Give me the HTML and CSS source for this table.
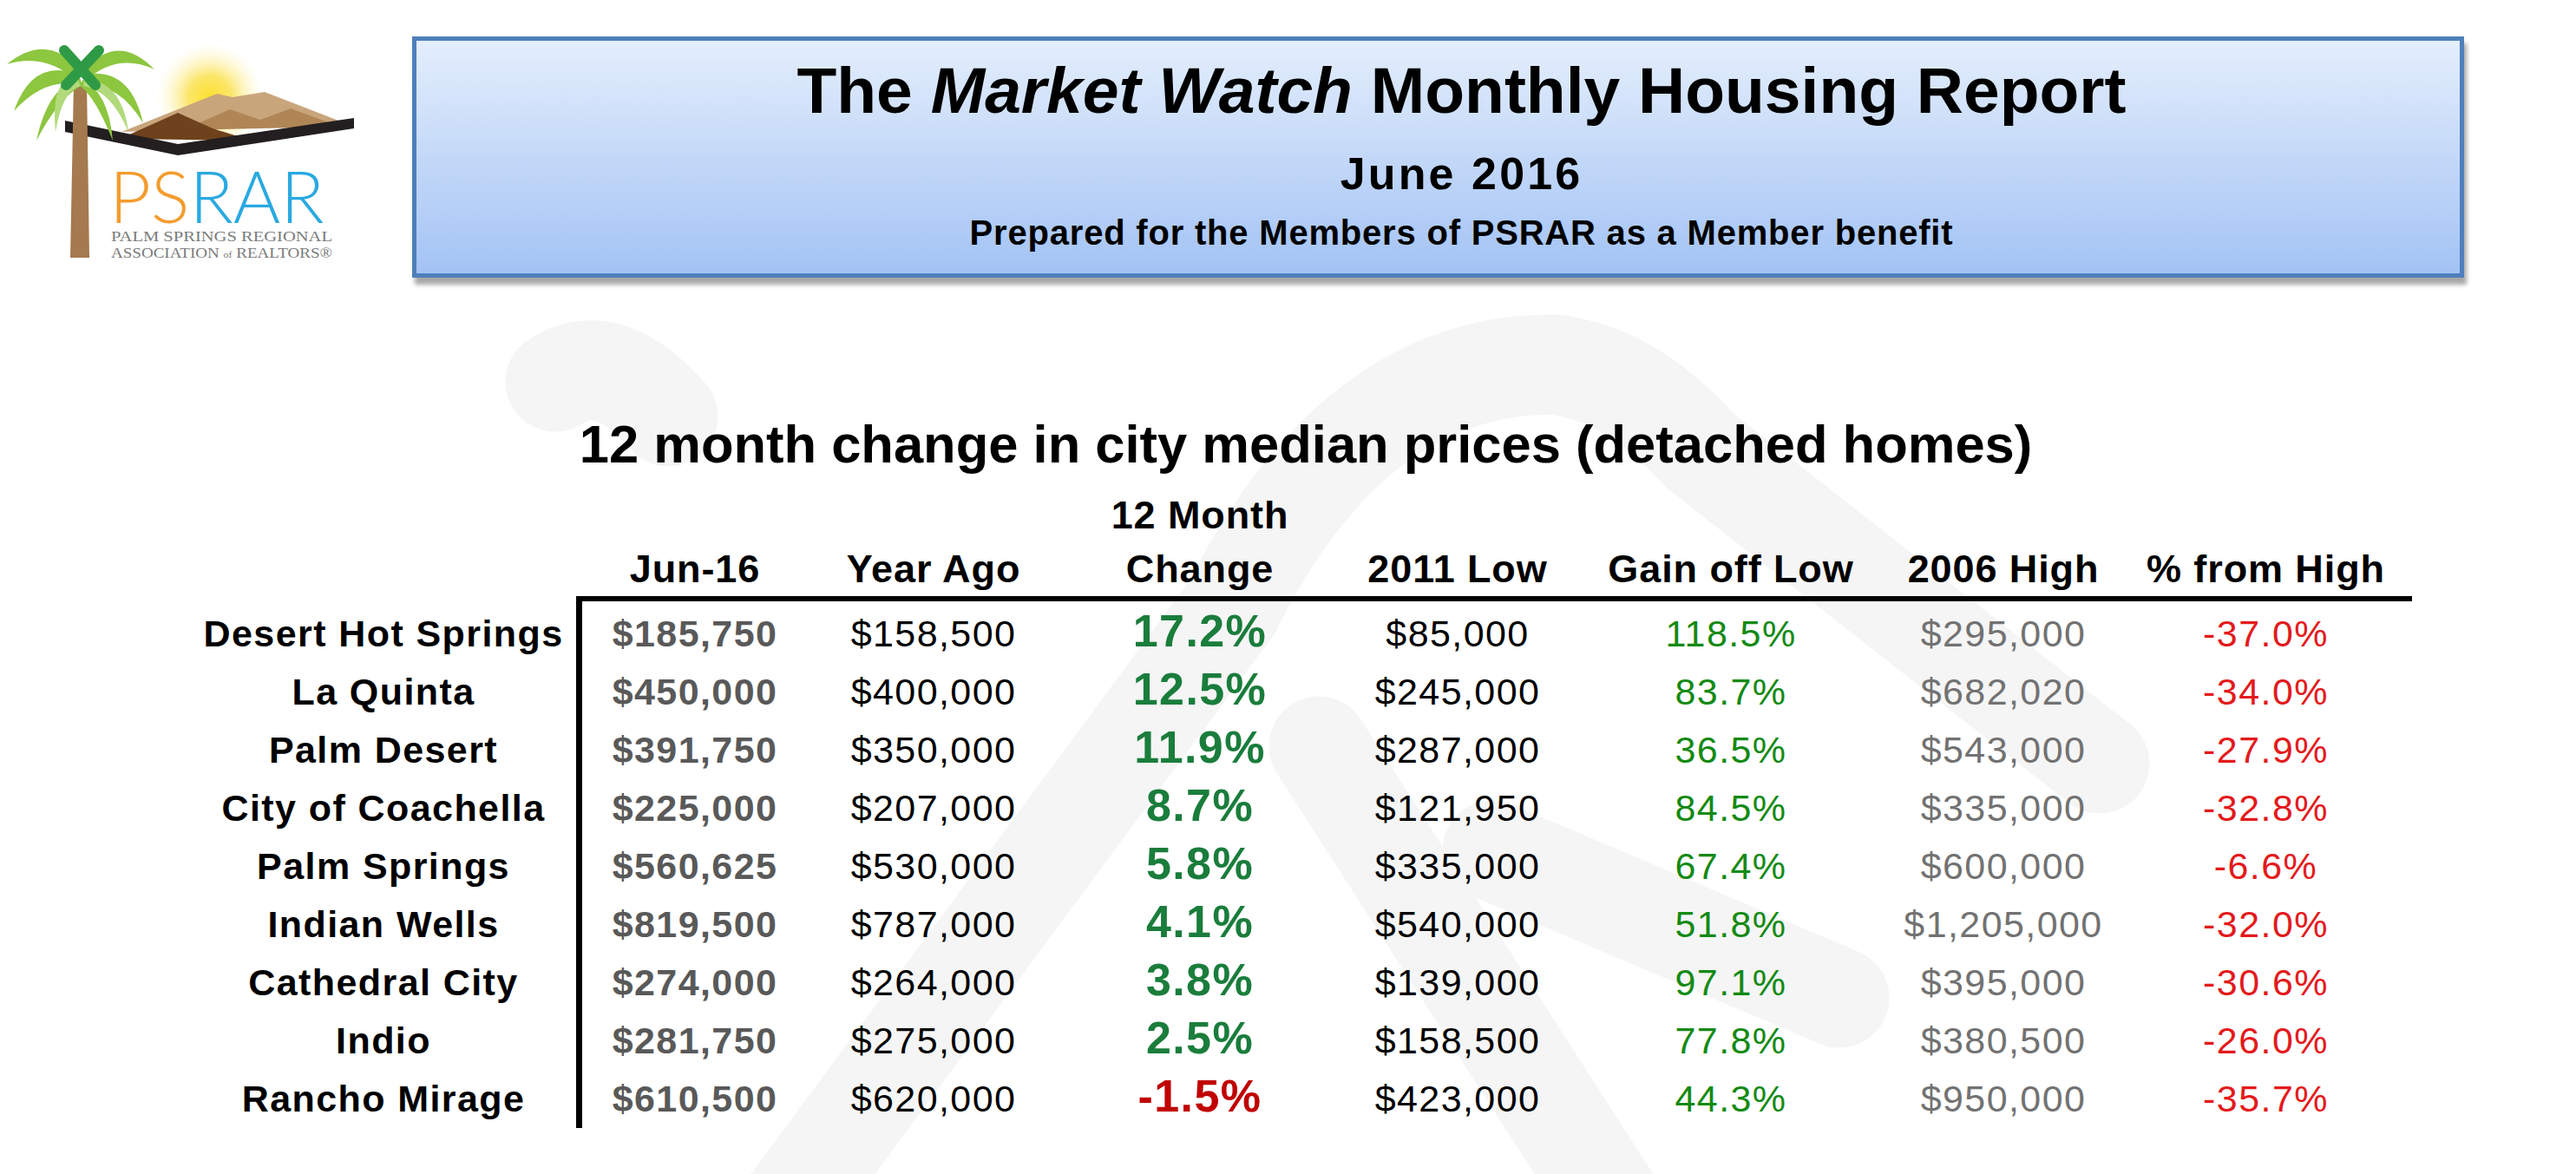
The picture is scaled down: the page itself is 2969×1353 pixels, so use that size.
FILE: index.html
```html
<!DOCTYPE html>
<html lang="en">
<head>
<meta charset="utf-8">
<title>The Market Watch Monthly Housing Report</title>
<link rel="stylesheet" href="styles.css">
</head>
<body>
<svg class="watermark" viewBox="0 0 2969 1353" aria-hidden="true">
  <g fill="none" stroke="#f5f5f5" stroke-linecap="round" stroke-width="115">
    <path d="M640 440 Q700 400 770 480"/>
    <path d="M880 1430 L1420 700"/>
    <path d="M1420 700 Q1560 420 1790 420 Q1880 430 1960 520 L2420 880"/>
    <path d="M1520 860 L1880 1420"/>
    <path d="M1720 980 L2120 1150"/>
  </g>
</svg>
<div class="page">
  <div class="top">
    <svg class="logo" viewBox="0 0 420 320">
      <defs>
        <radialGradient id="sun">
          <stop offset="0" stop-color="#fde130"/>
          <stop offset="0.4" stop-color="#fbe66a"/>
          <stop offset="1" stop-color="#fff8d0" stop-opacity="0"/>
        </radialGradient>
      </defs>
      <circle cx="242" cy="112" r="62" fill="url(#sun)"/>
      <path d="M140 152 L200 128 L250 108 L268 112 L305 106 L398 142 Z" fill="#c9a57c"/>
      <path d="M210 150 L265 126 L300 138 L335 125 L392 146 Z" fill="#b08656"/>
      <path d="M138 160 L205 130 L245 148 L290 162 Z" fill="#6e421c"/>
      <path d="M75 139 L205 166 L408 136 L408 148 L205 179 L75 152 Z" fill="#231f20"/>
      <path d="M85 95 L100 95 L103 297 L81 297 Z" fill="#a47a4e"/>
      <g fill="#8dc63f">
        <path d="M93 82 Q55 36 8 74 Q52 60 90 94 Z"/>
        <path d="M90 86 Q38 66 16 128 Q50 90 90 97 Z"/>
        <path d="M92 90 Q55 100 42 162 Q68 112 95 98 Z"/>
        <path d="M96 82 Q135 36 178 80 Q134 60 98 94 Z"/>
        <path d="M97 86 Q150 76 165 142 Q138 96 96 97 Z"/>
        <path d="M95 92 Q125 106 130 162 Q110 112 93 100 Z"/>
      </g>
      <g fill="#b2da7c">
        <path d="M90 92 Q58 86 64 152 Q72 104 93 99 Z"/>
        <path d="M97 92 Q140 92 148 152 Q128 104 96 99 Z"/>
      </g>
      <g stroke="#2f9a45" stroke-width="12" stroke-linecap="round">
        <line x1="74" y1="58" x2="110" y2="98"/>
        <line x1="114" y1="58" x2="76" y2="98"/>
      </g>
      <text class="lg-main" x="126" y="257">PS<tspan class="lg-blue">RAR</tspan></text>
      <text class="lg-sub" x="128" y="278" textLength="255" lengthAdjust="spacingAndGlyphs">PALM SPRINGS REGIONAL</text>
      <text class="lg-sub" x="128" y="297" textLength="255" lengthAdjust="spacingAndGlyphs">ASSOCIATION <tspan class="lg-of">of</tspan> REALTORS®</text>
    </svg>
    <div class="banner">
      <div class="b-title">The <em>Market Watch</em> Monthly Housing Report</div>
      <div class="b-date">June 2016</div>
      <div class="b-sub">Prepared for the Members of PSRAR as a Member benefit</div>
    </div>
  </div>

  <h1 class="t-title">12 month change in city median prices (detached homes)</h1>

  <div class="table">
    <div class="thead">
      <div></div>
      <div>Jun-16</div>
      <div>Year Ago</div>
      <div>12 Month<br>Change</div>
      <div>2011 Low</div>
      <div>Gain off Low</div>
      <div>2006 High</div>
      <div>% from High</div>
    </div>
    <div class="tbody">
      <div class="labels">
        <div>Desert Hot Springs</div>
        <div>La Quinta</div>
        <div>Palm Desert</div>
        <div>City of Coachella</div>
        <div>Palm Springs</div>
        <div>Indian Wells</div>
        <div>Cathedral City</div>
        <div>Indio</div>
        <div>Rancho Mirage</div>
      </div>
      <div class="data">
        <div class="c-cur">$185,750</div><div>$158,500</div><div class="c-chg">17.2%</div><div>$85,000</div><div class="c-gain">118.5%</div><div class="c-high">$295,000</div><div class="c-pct">-37.0%</div>
        <div class="c-cur">$450,000</div><div>$400,000</div><div class="c-chg">12.5%</div><div>$245,000</div><div class="c-gain">83.7%</div><div class="c-high">$682,020</div><div class="c-pct">-34.0%</div>
        <div class="c-cur">$391,750</div><div>$350,000</div><div class="c-chg">11.9%</div><div>$287,000</div><div class="c-gain">36.5%</div><div class="c-high">$543,000</div><div class="c-pct">-27.9%</div>
        <div class="c-cur">$225,000</div><div>$207,000</div><div class="c-chg">8.7%</div><div>$121,950</div><div class="c-gain">84.5%</div><div class="c-high">$335,000</div><div class="c-pct">-32.8%</div>
        <div class="c-cur">$560,625</div><div>$530,000</div><div class="c-chg">5.8%</div><div>$335,000</div><div class="c-gain">67.4%</div><div class="c-high">$600,000</div><div class="c-pct">-6.6%</div>
        <div class="c-cur">$819,500</div><div>$787,000</div><div class="c-chg">4.1%</div><div>$540,000</div><div class="c-gain">51.8%</div><div class="c-high">$1,205,000</div><div class="c-pct">-32.0%</div>
        <div class="c-cur">$274,000</div><div>$264,000</div><div class="c-chg">3.8%</div><div>$139,000</div><div class="c-gain">97.1%</div><div class="c-high">$395,000</div><div class="c-pct">-30.6%</div>
        <div class="c-cur">$281,750</div><div>$275,000</div><div class="c-chg">2.5%</div><div>$158,500</div><div class="c-gain">77.8%</div><div class="c-high">$380,500</div><div class="c-pct">-26.0%</div>
        <div class="c-cur">$610,500</div><div>$620,000</div><div class="c-chg c-neg">-1.5%</div><div>$423,000</div><div class="c-gain">44.3%</div><div class="c-high">$950,000</div><div class="c-pct">-35.7%</div>
      </div>
    </div>
  </div>
</div>
</body>
</html>
```

FILE: styles.css
```css
html, body {
  margin: 0;
  padding: 0;
}

body {
  width: 2969px;
  height: 1353px;
  overflow: hidden;
  position: relative;
  background: #ffffff;
  color: #000000;
  font-family: "Liberation Sans", Arial, sans-serif;
}

.watermark {
  position: absolute;
  left: 0;
  top: 0;
  width: 2969px;
  height: 1353px;
  z-index: 0;
}

.page {
  position: relative;
  z-index: 1;
}

/* ---------- top row ---------- */
.top {
  display: flex;
  align-items: flex-start;
  height: 320px;
}

.logo {
  width: 420px;
  height: 320px;
  flex: none;
}

.lg-main {
  font-family: "Lato", "Liberation Sans", sans-serif;
  font-weight: 300;
  font-size: 83px;
  fill: #f39c2e;
}

.lg-blue {
  fill: #29a9e1;
}

.lg-sub {
  font-family: "Liberation Serif", serif;
  font-size: 16px;
  fill: #7b7b7b;
}

.lg-of {
  font-size: 10px;
}

.banner {
  flex: none;
  box-sizing: border-box;
  width: 2365px;
  height: 278px;
  margin-top: 42px;
  margin-left: 55px;
  padding-left: 54px;
  border: 5px solid #4f7fbc;
  background: linear-gradient(#e4eefc, #a3c3f5);
  box-shadow: 3px 8px 5px rgba(0, 0, 0, 0.35);
  text-align: center;
  font-weight: bold;
}

.b-title {
  margin-top: 13px;
  font-size: 75px;
  line-height: 88px;
}

.b-title em {
  font-style: italic;
}

.b-date {
  margin-top: 22px;
  font-size: 52px;
  line-height: 60px;
  letter-spacing: 0.06em;
}

.b-sub {
  margin-top: 14px;
  font-size: 40px;
  line-height: 48px;
  letter-spacing: 0.02em;
}

/* ---------- table title ---------- */
.t-title {
  margin: 157px 0 0 41px;
  font-size: 61.5px;
  line-height: 70px;
  font-weight: bold;
  text-align: center;
}

/* ---------- table ---------- */
.table {
  margin-left: 220px;
  margin-top: 16px;
}

.thead {
  display: grid;
  grid-template-columns: 451px 260px 290px 324px 270px 360px 268px 337px;
  align-items: end;
  height: 124px;
  font-weight: bold;
  font-size: 45px;
  line-height: 62px;
  letter-spacing: 0.02em;
  text-align: center;
}

.tbody {
  display: flex;
  align-items: flex-start;
}

.labels {
  width: 444px;
  flex: none;
  padding-top: 10px;
  font-weight: bold;
  font-size: 43px;
  line-height: 67px;
  letter-spacing: 0.033em;
  text-align: center;
}

.data {
  display: grid;
  grid-template-columns: 260px 290px 324px 270px 360px 268px 337px;
  grid-auto-rows: 67px;
  padding-top: 4px;
  border-left: 7px solid #000;
  border-top: 6px solid #000;
  font-size: 43px;
  line-height: 67px;
  letter-spacing: 0.033em;
  text-align: center;
  white-space: nowrap;
}

.c-cur {
  font-weight: bold;
  color: #595959;
}

.c-chg {
  font-weight: bold;
  font-size: 52px;
  line-height: 61px;
  color: #1a7d3c;
}

.c-neg {
  color: #c00000;
}

.c-gain {
  color: #148a14;
}

.c-high {
  color: #727272;
}

.c-pct {
  color: #e31a1c;
}
```
